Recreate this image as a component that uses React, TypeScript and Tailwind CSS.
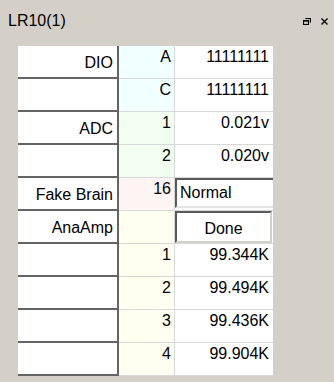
const rows = [
  { label: "DIO", idx: "A", value: "11111111", tint: "bg-[#f0ffff]" },
  { label: "", idx: "C", value: "11111111", tint: "bg-[#f0ffff]" },
  { label: "ADC", idx: "1", value: "0.021v", tint: "bg-[#f0fff0]" },
  { label: "", idx: "2", value: "0.020v", tint: "bg-[#f0fff0]" },
  { label: "Fake Brain", idx: "16", value: "normal", tint: "bg-[#fff4f4]" },
  { label: "AnaAmp", idx: "", value: "done", tint: "bg-[#fffff0]" },
  { label: "", idx: "1", value: "99.344K", tint: "bg-[#fffff0]" },
  { label: "", idx: "2", value: "99.494K", tint: "bg-[#fffff0]" },
  { label: "", idx: "3", value: "99.436K", tint: "bg-[#fffff0]" },
  { label: "", idx: "4", value: "99.904K", tint: "bg-[#fffff0]" },
];

function ValueCell({ value }: { value: string }) {
  if (value === "normal") {
    return (
      <div className="h-full border-b border-[#d8d8d8] bg-white pb-[2px]">
        <div className="flex h-full items-center border-2 border-r-0 border-t-[#5a5a5a] border-l-[#5a5a5a] border-b-[#e4e4e4] pl-[3px]">
          Normal
        </div>
      </div>
    );
  }
  if (value === "done") {
    return (
      <div className="h-full border-b border-[#d8d8d8] bg-white pr-[1px]">
        <div className="flex h-full items-center justify-center border-2 border-t-[#5a5a5a] border-l-[#5a5a5a] border-r-[#d4d0c8] border-b-[#d4d0c8] pt-[3px]">
          Done
        </div>
      </div>
    );
  }
  return (
    <div className="h-full border-b border-[#d8d8d8] bg-white pr-[4px] pt-[1px] text-right">
      {value}
    </div>
  );
}

export default function App() {
  return (
    <div
      className="h-[382px] w-[334px] overflow-hidden bg-[#d4d0c8] text-[16px] leading-[20px] text-black"
      style={{ fontFamily: '"Liberation Sans", Arial, sans-serif' }}
    >
      {/* Title bar */}
      <div className="flex items-center justify-between pl-[8px] pr-[6px] pt-[11px]">
        <span>LR10(1)</span>
        <div className="flex items-center gap-[10px] pt-[1px]">
          <svg width="8" height="7" viewBox="0 0 8 7">
            <path d="M2.5 0.5h5v4" fill="none" stroke="#000" strokeWidth="1.2" />
            <rect x="0.5" y="2.5" width="5" height="4" fill="none" stroke="#000" strokeWidth="1.2" />
            <path d="M0 3h6" stroke="#000" strokeWidth="1.2" />
          </svg>
          <svg width="7" height="7" viewBox="0 0 7 7">
            <path d="M0.5 0.5l6 6M6.5 0.5l-6 6" stroke="#000" strokeWidth="1.4" />
          </svg>
        </div>
      </div>

      {/* Table */}
      <div className="ml-[18px] mt-[15px] w-[255px]">
        {rows.map((r, i) => (
          <div key={i} className="grid h-[33px] grid-cols-[101px_56px_98px]">
            <div className="flex items-center justify-end border-b-2 border-r-2 border-[#646464] bg-white pr-[4px] pt-[2px]">
              {r.label}
            </div>
            <div className={`border-b border-r border-[#d8d8d8] ${r.tint} pr-[3px] pt-[1px] text-right`}>
              {r.idx}
            </div>
            <ValueCell value={r.value} />
          </div>
        ))}
      </div>
    </div>
  );
}
